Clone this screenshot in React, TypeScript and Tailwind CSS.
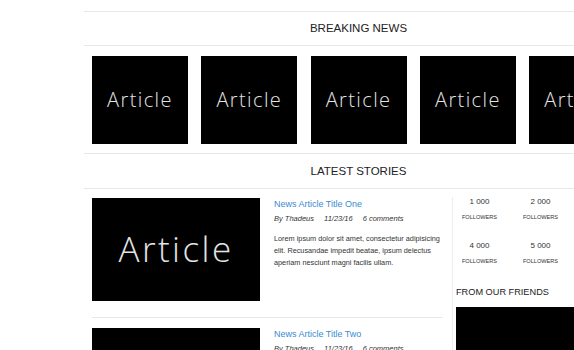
const articleFont = { fontFamily: '"Open Sans", "Noto Sans", sans-serif' };

const Tile = ({ className = "", big = false }: { className?: string; big?: boolean }) => (
  <div className={`flex shrink-0 items-center justify-center bg-black ${className}`}>
    <span
      style={articleFont}
      className={`font-light tracking-[0.07em] text-[#e4e4e4] ${big ? "text-[35px]" : "text-[20px]"}`}
    >
      Article
    </span>
  </div>
);

const SectionHeading = ({ title, className = "" }: { title: string; className?: string }) => (
  <div
    className={`flex items-center justify-center border-y border-[#e8e8e8] pt-[1px] text-[11.5px] text-[#222] ${className}`}
  >
    {title}
  </div>
);

const Story = ({ title, first = false }: { title: string; first?: boolean }) => (
  <div className={`flex gap-[14px] border-b border-[#e8e8e8] pb-[16px] ${first ? "" : "pt-[10px]"}`}>
    <Tile big className="h-[103px] w-[168px]" />
    <div className="flex-1">
      <div className="text-[9px] leading-[12px] text-[#3a8bd2]">{title}</div>
      <div className="mt-[4px] flex gap-[10px] text-[7.5px] italic leading-[10px] text-[#333]">
        <span>By Thadeus</span>
        <span>11/23/16</span>
        <span>6 comments</span>
      </div>
      <p className="mt-[9px] text-[7.3px] leading-[12px] text-[#333]">
        Lorem ipsum dolor sit amet, consectetur adipisicing elit. Recusandae impedit beatae,
        ipsum delectus aperiam nesciunt magni facilis ullam.
      </p>
    </div>
  </div>
);

const followers = ["1 000", "2 000", "3 000", "4 000", "5 000", "6 000"];

export default function App() {
  return (
    <div
      className="h-[350px] w-[574px] overflow-hidden bg-white"
      style={{ fontFamily: '"Liberation Sans", Arial, sans-serif' }}
    >
      <div className="ml-[84px] w-[549px] pt-[11px]">
        <SectionHeading title="BREAKING NEWS" className="h-[35px]" />

        <div className="flex gap-[13.3px] px-[8px] pb-[9px] pt-[10px]">
          {[0, 1, 2, 3, 4].map((i) => (
            <Tile key={i} className="h-[88px] w-[96px]" />
          ))}
        </div>

        <SectionHeading title="LATEST STORIES" className="h-[36px]" />

        <div className="flex">
          <div className="w-[368px] shrink-0 pl-[8px] pr-[9px] pt-[9px]">
            <Story first title="News Article Title One" />
            <Story title="News Article Title Two" />
          </div>

          <aside className="mt-[8px] flex-1 border-l border-[#eeeeee] pl-[3px]">
            <div className="-ml-[7px] grid w-[183px] grid-cols-3">
              {followers.map((count) => (
                <div key={count} className="flex h-[44px] flex-col items-center">
                  <span className="text-[8px] leading-[10px] text-[#333]">{count}</span>
                  <span className="mt-[6px] text-[5.6px] leading-[8px] text-[#333]">FOLLOWERS</span>
                </div>
              ))}
            </div>
            <h3 className="mt-[1px] text-[9.2px] leading-[12px] text-[#222]">FROM OUR FRIENDS</h3>
            <div className="mt-[9px] h-[120px] w-[176px] bg-black" />
          </aside>
        </div>
      </div>
    </div>
  );
}
